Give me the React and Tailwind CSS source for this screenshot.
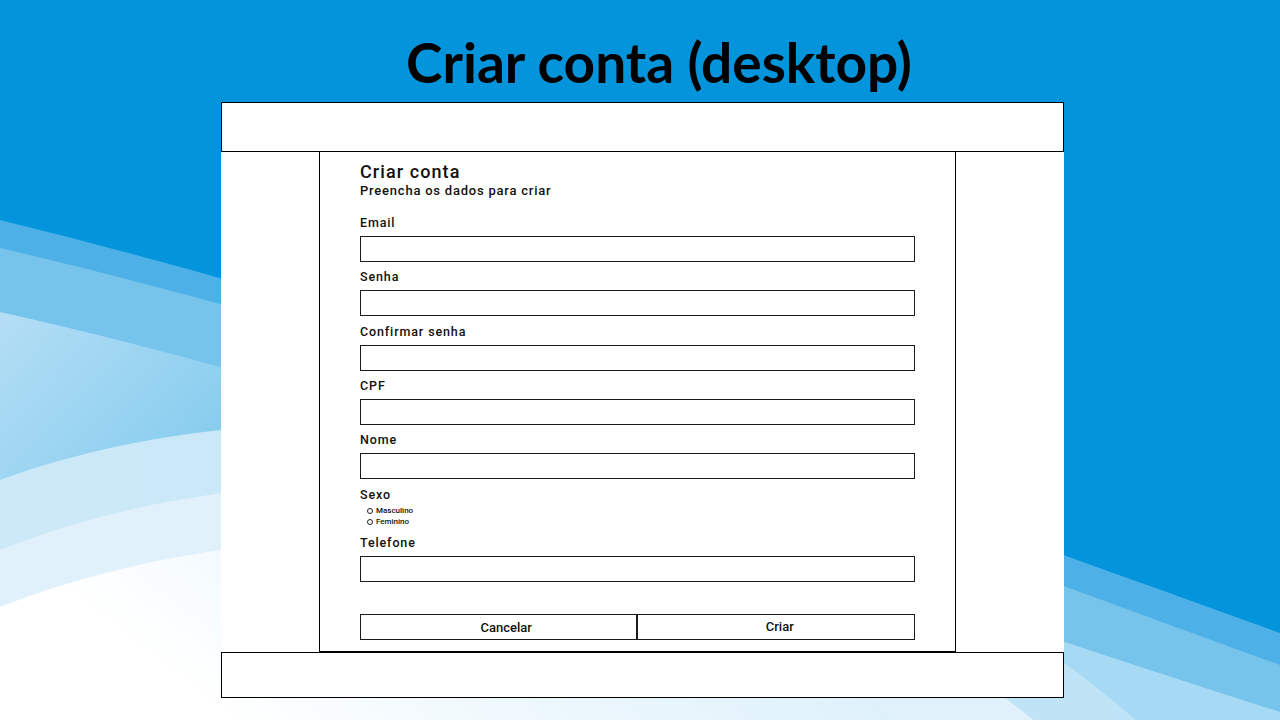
import React from 'react';

const fields = [
  { label: 'Email', mb: 'mb-[7px]' },
  { label: 'Senha', mb: 'mb-[8px]' },
  { label: 'Confirmar senha', mb: 'mb-[7px]' },
  { label: 'CPF', mb: 'mb-[7px]' },
  { label: 'Nome', mb: 'mb-[8px]' },
];

const Field = ({ label, mb }) => (
  <div className={`flex flex-col ${mb}`}>
    <label className="block h-[16px] leading-[16px] text-[12.5px] font-medium tracking-[0.07em] text-[#111] mb-[5px]">{label}</label>
    <div className="h-[26px] w-full border border-[#1a1a1a] bg-white" />
  </div>
);

const Radio = ({ label }) => (
  <div className="flex items-center h-[11px] pl-[7px] gap-[3px]">
    <span className="inline-block w-[6px] h-[6px] rounded-full border-[1.5px] border-[#222] bg-white" />
    <span className="text-[8px] font-medium leading-none text-[#111]">{label}</span>
  </div>
);

const Waves = () => (
  <svg className="absolute inset-0" width="1280" height="720" viewBox="0 0 1280 720" preserveAspectRatio="none">
    <defs>
      <linearGradient id="bandC" x1="0" y1="0" x2="1" y2="0.3">
        <stop offset="0" stopColor="#b4def5" />
        <stop offset="0.25" stopColor="#86ccee" />
        <stop offset="1" stopColor="#a6d9f3" />
      </linearGradient>
      <linearGradient id="low1" x1="0" y1="0" x2="1" y2="0">
        <stop offset="0" stopColor="#cde9f8" />
        <stop offset="1" stopColor="#bde3f6" />
      </linearGradient>
      <linearGradient id="low3" x1="0" y1="0" x2="1" y2="-0.3">
        <stop offset="0" stopColor="#ffffff" />
        <stop offset="0.3" stopColor="#eef8fd" />
        <stop offset="1" stopColor="#cfeaf9" />
      </linearGradient>
    </defs>
    <rect width="1280" height="720" fill="#0394dc" />
    <path d="M0,220 C400,318 800,460 1280,633 L1280,720 L0,720 Z" fill="#4db0e6" />
    <path d="M0,248 C400,340 800,490 1280,665 L1280,720 L0,720 Z" fill="#76c4ec" />
    <path d="M0,312 C400,400 800,560 1280,712 L1280,720 L0,720 Z" fill="url(#bandC)" />
    <path d="M0,480 C300,370 800,400 1180,760 L0,760 Z" fill="url(#low1)" />
    <path d="M0,550 C300,430 750,460 1080,760 L0,760 Z" fill="#e0f1fb" />
    <path d="M0,607 C300,490 700,520 940,760 L0,760 Z" fill="url(#low3)" />
  </svg>
);

export default function App() {
  return (
    <div className="relative w-[1280px] h-[720px] overflow-hidden bg-[#0394dc] font-['Roboto',Arial,sans-serif]">
      <Waves />
      <div className="relative flex flex-col">
        <h1 className="mt-[30px] h-[72px] pl-[38px] text-center text-[55px] leading-[64px] font-bold text-black font-['Lato','Open_Sans',sans-serif]">
          Criar conta (desktop)
        </h1>
        <div className="ml-[221px] w-[843px]">
          <div className="h-[50px] border border-black bg-white" />
          <div className="h-[500px] bg-white pl-[98px]">
            <div className="flex flex-col w-[637px] h-full border-x border-b border-black px-[40px] pt-[10px]">
              <h2 className="text-[18px] leading-[20px] font-medium tracking-[0.06em] text-[#111]">Criar conta</h2>
              <p className="mt-[1px] mb-[16px] text-[13px] leading-[16px] font-medium tracking-[0.06em] text-[#111]">Preencha os dados para criar</p>
              {fields.map((f) => (
                <Field key={f.label} label={f.label} mb={f.mb} />
              ))}
              <label className="block h-[16px] leading-[16px] text-[12.5px] font-medium tracking-[0.07em] text-[#111]">Sexo</label>
              <div className="mt-[2px] mb-[8px]">
                <Radio label="Masculino" />
                <Radio label="Feminino" />
              </div>
              <Field label="Telefone" mb="mb-[32px]" />
              <div className="grid grid-cols-2 h-[26px]">
                <button className="pl-[16px] pt-[1px] border border-r-[2px] border-[#1a1a1a] bg-white text-[13px] font-medium text-[#111]">Cancelar</button>
                <button className="pl-[8px] pb-[1px] border border-l-0 border-[#1a1a1a] bg-white text-[13px] font-medium text-[#111]">Criar</button>
              </div>
            </div>
          </div>
          <div className="h-[46px] border border-black bg-white" />
        </div>
      </div>
    </div>
  );
}
